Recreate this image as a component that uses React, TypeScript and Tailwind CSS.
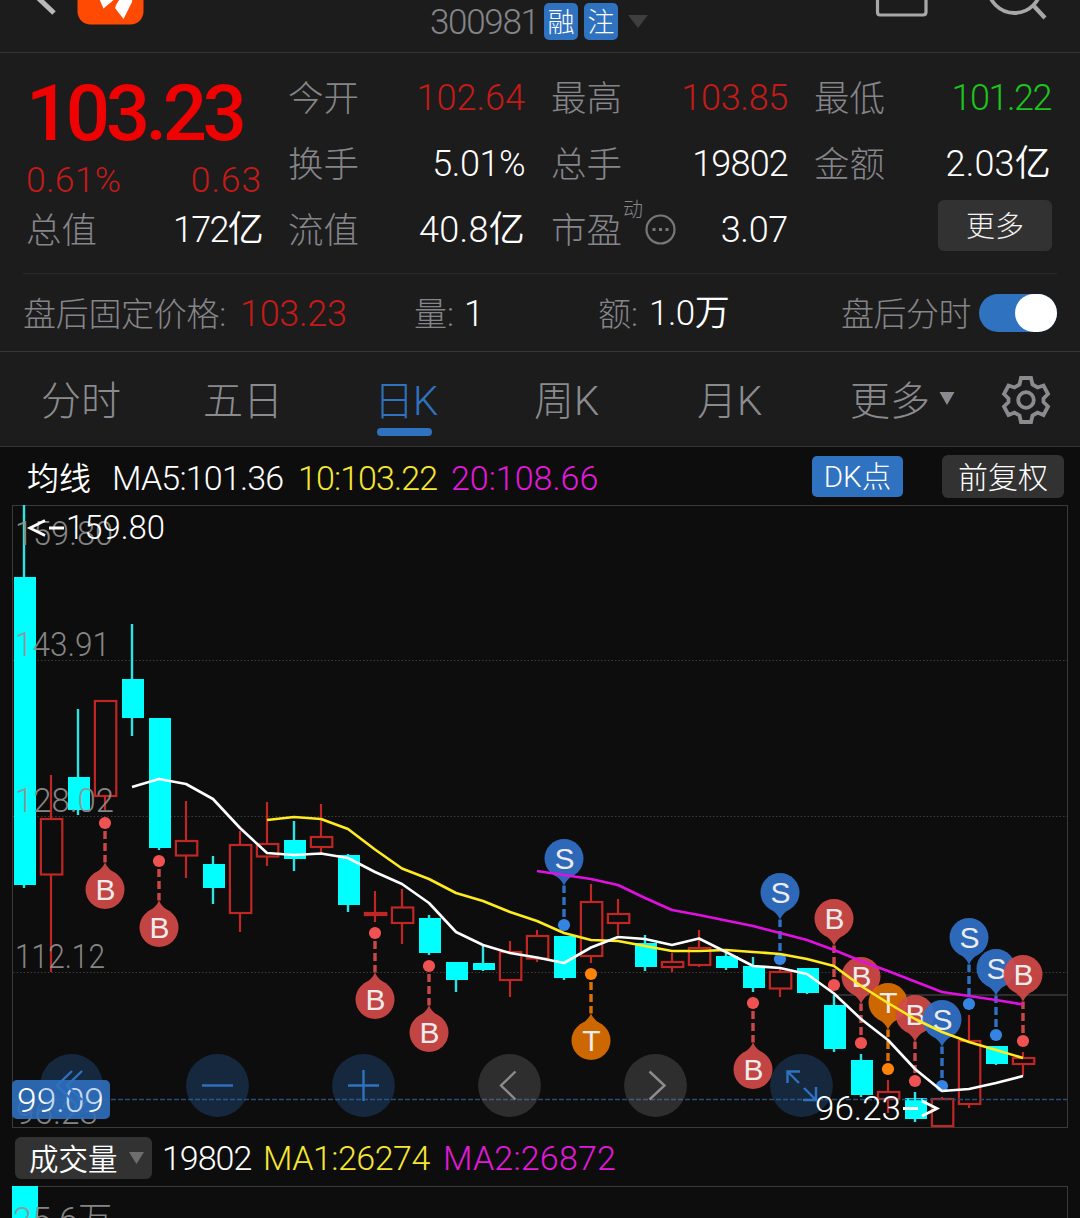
import React from "react";

type Candle = [kind: "up" | "down", high: number, top: number, bottom: number, low: number];

const CANDLES: Candle[] = [
  ["down", 505, 577, 885, 888],
  ["up", 775, 819, 874.5, 972],
  ["down", 709, 777, 810, 815],
  ["up", 701, 701, 796, 810],
  ["down", 624, 679, 718, 736],
  ["down", 718, 718, 848, 850],
  ["up", 801, 841, 855.5, 878],
  ["down", 856, 864, 888, 904],
  ["up", 831, 845, 913, 932],
  ["up", 802, 844, 856.5, 866],
  ["down", 821, 840, 859, 871],
  ["up", 804, 837, 847, 853],
  ["down", 854, 855, 905, 912],
  ["up", 891, 913, 915, 922],
  ["up", 889, 907.5, 923, 944],
  ["down", 915, 918, 953, 955],
  ["down", 962, 962, 980, 992],
  ["down", 945, 963, 970, 971],
  ["up", 941, 952, 980, 997],
  ["up", 930, 936, 958.5, 962],
  ["down", 936, 936, 978, 980],
  ["up", 884, 902, 956, 963],
  ["up", 899, 914, 923, 935],
  ["down", 935, 943, 967, 971],
  ["up", 953, 962, 967, 972],
  ["up", 930, 948, 965, 967],
  ["down", 953, 956, 968, 970],
  ["down", 957, 966, 988, 992],
  ["up", 969, 972, 988.5, 997],
  ["down", 968, 968, 993, 994],
  ["down", 995, 1005, 1049, 1052],
  ["down", 1054, 1060, 1095, 1097],
  ["up", 1080, 1092, 1099, 1113],
  ["down", 1092, 1098, 1119, 1122],
  ["up", 1097, 1099, 1126, 1126],
  ["up", 1015, 1041, 1104, 1108],
  ["down", 1046, 1046, 1064, 1065],
  ["up", 1052, 1058, 1064, 1076],
];

const MA5 = [787, 779, 784, 799, 828, 853, 855, 853.5, 858, 872, 884, 903, 932, 945, 953, 957.5, 963, 947.5, 937, 939, 945, 938.5, 952, 966, 968, 974, 993.5, 1019, 1040, 1069, 1091, 1089, 1083, 1076];
const MA10 = [820, 817, 819, 829, 849.5, 868.5, 879, 893, 901, 912, 921, 933, 940, 941, 946, 951, 951, 950, 952, 954, 959, 966, 986, 1003, 1019, 1032, 1042, 1050, 1058];
const MA20 = [871, 875, 879, 885, 898, 910, 915, 920.5, 926, 933, 940, 950, 961, 971, 981.5, 992, 996, 1000, 1004.5];

type Pin = [index: number, letter: "B" | "S" | "T", cy: number, pointsUp: boolean];

const PINS: Pin[] = [
  [3, "B", 889.5, true],
  [5, "B", 927.5, true],
  [13, "B", 999.5, true],
  [15, "B", 1032.5, true],
  [20, "S", 858.5, false],
  [21, "T", 1040.5, true],
  [27, "B", 1069.5, true],
  [28, "S", 892.5, false],
  [30, "B", 918.5, false],
  [31, "B", 976.5, false],
  [32, "T", 1002.5, false],
  [33, "B", 1014.5, false],
  [34, "S", 1019.5, false],
  [35, "S", 937.5, false],
  [36, "S", 968.5, false],
  [37, "B", 974.5, false],
];

const PIN_FILL = { B: "#d24a49", S: "#3070c8", T: "#dd6f02" };
const DOT_FILL = { B: "#f05252", S: "#3584e4", T: "#ff8307" };

const xAt = (i: number) => 24 + 27 * i;
const line = (values: number[], start: number) => values.map((y, k) => `${xAt(start + k)},${y}`).join(" ");

function CandleShape({ c, i }: { c: Candle; i: number }) {
  const x = xAt(i);
  const [kind, high, top, bottom, low] = c;
  if (kind === "down") {
    return (
      <g>
        <path d={`M${x} ${high}V${top}M${x} ${bottom}V${low}`} stroke="#2fe3e3" strokeWidth="2.4" />
        <rect x={x - 10} y={top} width="22" height={bottom - top} fill="#00ffff" />
      </g>
    );
  }
  return (
    <g stroke="#c02724" strokeWidth="2.2" fill="none">
      <path d={`M${x} ${high}V${top}M${x} ${bottom}V${low}`} />
      <rect x={x - 10.1} y={top} width="21.4" height={bottom - top} />
    </g>
  );
}

function PinShape({ pin }: { pin: Pin }) {
  const [i, letter, cy, up] = pin;
  const x = xAt(i);
  const s = up ? -1 : 1;
  const dotY = cy + s * 66.5;
  return (
    <g>
      <path d={`M${x} ${dotY}V${cy + s * 27}`} stroke={DOT_FILL[letter]} strokeOpacity="0.85" strokeWidth="3.4" strokeDasharray="8 4" strokeDashoffset="-8" />
      <circle cx={x} cy={dotY} r="6.1" fill={DOT_FILL[letter]} />
      <g opacity="0.92">
        <circle cx={x} cy={cy} r="19.5" fill={PIN_FILL[letter]} />
        <path d={`M${x - 11} ${cy + s * 16}Q${x - 3} ${cy + s * 20} ${x} ${cy + s * 27}Q${x + 3} ${cy + s * 20} ${x + 11} ${cy + s * 16}Z`} fill={PIN_FILL[letter]} />
        <text x={x + 0.5} y={cy + 10.5} textAnchor="middle" fontSize="30" fontWeight="400" fill="#fff" fontFamily="Liberation Sans, sans-serif">{letter}</text>
      </g>
    </g>
  );
}

function AxisText({ x, y, w, children, fill = "#939393", opacity = 0.9 }: { x: number; y: number; w: number; children: string; fill?: string; opacity?: number }) {
  return (
    <text x={x} y={y} textLength={w} lengthAdjust="spacingAndGlyphs" fontSize="34" fill={fill} opacity={opacity}>{children}</text>
  );
}

const BUTTONS = [
  { x: 71, blue: true, d: "M72 1071L57 1085.500L72 1100M82 1071L67 1085.500L82 1100" },
  { x: 217, blue: true, d: "M202 1085.500H233" },
  { x: 363, blue: true, d: "M348 1085.500H379M363.500 1070V1101" },
  { x: 509, blue: false, d: "M515.500 1071.500L501 1085.500L515.500 1099.500" },
  { x: 655, blue: false, d: "M649.500 1071.500L664.500 1085.500L649.500 1099.500" },
  { x: 801, blue: true, d: "M787.500 1083V1071.500H800M788 1072L799 1083M816 1087V1100H803M804 1088L816 1100" },
];

function KChart() {
  return (
    <svg className="block shrink-0" width="1080" height="624" viewBox="0 505 1080 624" fontFamily="Roboto, sans-serif" fontWeight="300">
      <rect x="12.5" y="505.5" width="1055" height="622" fill="none" stroke="#3a3a3a" />
      {[660.5, 816.5, 972.5].map((y) => (
        <path key={y} d={`M13 ${y}H1067`} stroke="#3c3c3c" strokeDasharray="1.500 2" />
      ))}
      <path d="M834 995H1067" stroke="#3a3a3a" strokeWidth="1.500" />
      {CANDLES.map((c, i) => <CandleShape key={i} c={c} i={i} />)}
      <AxisText x={15} y={545} w={98}>159.80</AxisText>
      <AxisText x={15} y={656} w={95}>143.91</AxisText>
      <AxisText x={15} y={812} w={99}>128.02</AxisText>
      <AxisText x={15} y={968} w={90}>112.12</AxisText>
      <AxisText x={16} y={1124} w={82}>96.23</AxisText>
      {PINS.map((p) => <PinShape key={p[0]} pin={p} />)}
      <g fill="none" strokeWidth="2.600" strokeLinejoin="round">
        <polyline points={line(MA20, 19)} stroke="#e010e0" />
        <polyline points={line(MA10, 9)} stroke="#ffeb1e" />
        <polyline points={line(MA5, 4)} stroke="#fff" />
      </g>
      <path d="M13 1099.500H1067" stroke="#2b4c74" strokeWidth="1.500" strokeDasharray="5 2" />
      <rect x="12" y="1080" width="98" height="39" rx="5" fill="#2f6fbd" fillOpacity="0.9" />
      <g fontWeight="360">
        <AxisText x={17} y={1112} w={87} fill="#fff" opacity={1}>99.09</AxisText>
      </g>
      {BUTTONS.map((b) => (
        <g key={b.x}>
          <circle cx={b.x + 0.5} cy="1085.500" r="31.400" fill={b.blue ? "#2f72c4" : "#8a8a8a"} fillOpacity="0.27" />
          <path d={b.d} fill="none" stroke={b.blue ? "#2f72c0" : "#8c8c90"} strokeWidth="2.400" />
        </g>
      ))}
      <g fontWeight="360" fill="none" stroke="#fff" strokeWidth="2.800">
        <path d="M45 520.500L30 528L45 535.500M49 528H64" />
        <path d="M903 1108.500H918M922 1101L937 1108.500L922 1116" />
        <g stroke="none">
          <AxisText x={66} y={539} w={99} fill="#fff" opacity={1}>159.80</AxisText>
          <AxisText x={815} y={1120} w={86} fill="#fff" opacity={1}>96.23</AxisText>
        </g>
      </g>
    </svg>
  );
}

function Stat({ label, value, tone = "text-white" }: { label: React.ReactNode; value: string; tone?: string }) {
  return (
    <div className="flex h-[66px] items-center justify-between leading-[66px]">
      <span className="pt-1 text-[35.500px] text-[#85858a]">{label}</span>
      <span className={`pt-px text-[36px] ${tone}`}>{value}</span>
    </div>
  );
}

export default function App() {
  return (
    <div className="flex h-[1218px] w-[1080px] flex-col overflow-hidden bg-[#0d0d0d] font-['Roboto','Noto_Sans_CJK_SC',sans-serif] font-light whitespace-nowrap text-white">
      <header className="relative h-[53px] shrink-0 border-b border-[#363636] bg-[#1c1c1c]">
        <svg className="absolute top-0 left-0" width="160" height="30" fill="none">
          <path d="M34 -6L54 13" stroke="#b9b9b9" strokeWidth="5" />
          <rect x="77.500" y="-40" width="66" height="64.500" rx="13" fill="#ff4a03" />
          <path d="M98 -4L103.500 8.500L122 -7ZM133 -8L132 2L123.500 19L115 8Q116 3 124 -6Z" fill="#fff" />
        </svg>
        <div className="flex h-[43px] items-center pl-[430px]">
          <span className="w-[114px] pt-0.5 text-[35px] leading-[43px] tracking-[-1.300px] text-[#85858a]">300981</span>
          <span className="mr-1.5 flex h-[37px] w-[34px] items-center justify-center rounded-[5px] bg-[#2f72c0] pt-1 text-[27px] leading-none">融</span>
          <span className="flex h-[37px] w-[34px] items-center justify-center rounded-[5px] bg-[#2f72c0] pt-1 text-[27px] leading-none">注</span>
          <svg className="ml-[10px]" width="21" height="14"><path d="M0 0H20L10 13Z" fill="#3e3e3e" /></svg>
        </div>
        <svg className="absolute top-0 right-0" width="220" height="30" fill="none" stroke="#a8a8a8" strokeWidth="3.200">
          <path d="M17.500 -5V12Q17.500 15 20 15H63Q66 15 66 12V-5" />
          <circle cx="154.500" cy="-13.500" r="26.500" strokeWidth="3.800" />
          <path d="M173 5L185 18" strokeWidth="4.200" />
        </svg>
      </header>

      <section className="h-[299px] shrink-0 border-b border-[#363636] bg-[#1c1c1c]">
        <div className="ml-[26px] grid h-[220px] w-[1026px] grid-cols-[236px_237px_237px_237px] gap-x-[26px] pt-[11px]">
          <div className="flex flex-col">
            <div className="h-[96px] text-[78px] leading-[99px] font-medium tracking-[-4.500px] text-[#ee0202]">103.23</div>
            <div className="flex h-[36px] items-center justify-between pt-[3px] text-[35.500px] leading-[36px] text-[#c41b18]">
              <span className="tracking-[0.300px]">0.61%</span>
              <span className="tracking-[0.900px]">0.63</span>
            </div>
            <Stat label="总值" value="172亿" tone="text-white font-[360] tracking-[-1.700px]" />
          </div>
          <div>
            <Stat label="今开" value="102.64" tone="text-[#c41b18]" />
            <Stat label="换手" value="5.01%" tone="text-white font-[360] tracking-[-0.500px]" />
            <Stat label="流值" value="40.8亿" tone="text-white font-[360] tracking-[0.300px]" />
          </div>
          <div>
            <Stat label="最高" value="103.85" tone="text-[#c41b18] tracking-[-0.300px]" />
            <Stat label="总手" value="19802" tone="text-white font-[360] tracking-[-0.800px]" />
            <Stat
              label={
                <span className="flex items-center">
                  市盈
                  <span className="mt-[-42px] ml-px text-[20px] leading-none">动</span>
                  <svg className="mt-[-4px] ml-[2px]" width="31" height="31" fill="none" stroke="#77777a" strokeWidth="2.200">
                    <circle cx="15.500" cy="15.500" r="14" />
                    <path d="M7.500 15.500h3M14 15.500h3M20.500 15.500h3" strokeWidth="3" />
                  </svg>
                </span>
              }
              value="3.07"
              tone="text-white font-[360] tracking-[-0.300px]"
            />
          </div>
          <div>
            <Stat label="最低" value="101.22" tone="text-[#1ec31e] tracking-[-1.500px]" />
            <Stat label="金额" value="2.03亿" tone="text-white font-[360] tracking-[0.200px]" />
            <div className="flex h-[59px] items-center justify-end">
              <button className="mr-[-1px] h-[51px] w-[114px] rounded-[6px] bg-[#323232] pt-[3px] text-[29px] leading-[48px] font-light text-[#f2f2f2]">更多</button>
            </div>
          </div>
        </div>
        <div className="mr-[23px] ml-[23px] flex h-[78px] items-center border-t border-[#292929] text-[33px] leading-[74px] text-[#85858a]">
          <span className="w-[217px] pt-1 tracking-[-0.300px]">盘后固定价格:</span>
          <span className="w-[174px] pt-0.5 text-[36px] tracking-[-0.300px] text-[#c41b18]">103.23</span>
          <span className="w-[50px] pt-1">量:</span>
          <span className="w-[134px] pt-0.5 text-[36px] font-[360] text-white">1</span>
          <span className="w-[51px] pt-1">额:</span>
          <span className="w-[192px] pt-0.5 text-[35px] font-[360] tracking-[-0.500px] text-white">1.0万</span>
          <span className="w-[138px] pt-1 tracking-[-0.500px]">盘后分时</span>
          <span className="flex h-[38px] w-[78px] shrink-0 justify-end rounded-full bg-[#2f72c0]">
            <span className="h-[38px] w-[42px] rounded-full bg-white" />
          </span>
        </div>
      </section>

      <nav className="flex h-[95px] shrink-0 items-center border-b border-[#363636] bg-[#1c1c1c] pl-[41px] text-[40px] leading-[88px] text-[#8b8b8f]">
        <span className="w-[162px] pt-1.5">分时</span>
        <span className="w-[171px] pt-1.5">五日</span>
        <span className="relative w-[160px] pt-1.5 tracking-[-1px] text-[#2f72c0]">
          日K
          <span className="absolute top-[76px] left-[3px] h-[8px] w-[55px] rounded-full bg-[#2f72c0]" />
        </span>
        <span className="w-[163px] pt-1.5">周K</span>
        <span className="w-[153px] pt-1.5">月K</span>
        <span className="w-[89px] pt-1.5">更多</span>
        <svg className="mr-[46px]" width="16" height="14"><path d="M0.500 0H15.500L8 13Z" fill="#8b8b8f" /></svg>
        <svg className="mt-0.5" width="50" height="50" viewBox="0 0 50 50" fill="none" stroke="#8b8b8f" strokeWidth="3.800">
          <path d="M20 3H30L31.500 9.500L36.500 12.500L42.500 10.500L47 19L42.500 23.500V27L47 31.500L42.500 40L36.500 37.500L31.500 40.500L30 47H20L18.500 40.500L13.500 37.500L7.500 40L3 31.500L7.500 27V23.500L3 19L7.500 10.500L13.500 12.500L18.500 9.500Z" />
          <circle cx="25" cy="25" r="7.800" />
        </svg>
      </nav>

      <div className="flex h-[58px] shrink-0 items-center pl-[27px] text-[34px] leading-[56px]">
        <span className="w-[85px] pt-1.5 text-[32px] font-[360]">均线</span>
        <span className="w-[186px] pt-1 font-[360] tracking-[-0.800px]">MA5:101.36</span>
        <span className="w-[153px] pt-1 font-[360] tracking-[-0.900px] text-[#f7e731]">10:103.22</span>
        <span className="w-[361px] pt-1 font-[340] tracking-[0px] text-[#e319dc]">20:108.66</span>
        <button className="mr-[39px] h-[41px] w-[91px] rounded-[5px] bg-[#2f72c0] pt-0.5 text-[29.500px] leading-[39px]">DK点</button>
        <button className="h-[43px] w-[122px] rounded-[6px] bg-[#323232] pt-0.5 text-[30px] leading-[41px]">前复权</button>
      </div>

      <KChart />

      <div className="flex h-[57px] shrink-0 items-center pl-[15px] text-[34px] leading-[55px]">
        <button className="mr-[10px] flex h-[42px] w-[137px] items-center justify-between rounded-[6px] bg-[#323232] pr-[8px] pl-[14px] text-[29.500px] leading-[38px] font-[360]">
          <span className="pt-1">成交量</span>
          <svg width="15" height="12"><path d="M0 0H15L7.500 12Z" fill="#6e6e6e" /></svg>
        </button>
        <span className="w-[101px] pt-0.5 font-[360] tracking-[-1px]">19802</span>
        <span className="w-[180px] pt-0.5 font-[360] tracking-[-0.500px] text-[#f7e731]">MA1:26274</span>
        <span className="pt-0.5 font-[340] tracking-[0.200px] text-[#e319dc]">MA2:26872</span>
      </div>

      <svg className="block shrink-0" width="1080" height="32" viewBox="0 1186 1080 32" fontFamily="Roboto, 'Noto Sans CJK SC', sans-serif" fontWeight="300">
        <rect x="12.500" y="1186.500" width="1055" height="60" fill="none" stroke="#3a3a3a" />
        <rect x="12" y="1186" width="26" height="32" fill="#00ffff" />
        <AxisText x={13} y={1231} w={99}>25.6万</AxisText>
      </svg>
    </div>
  );
}
